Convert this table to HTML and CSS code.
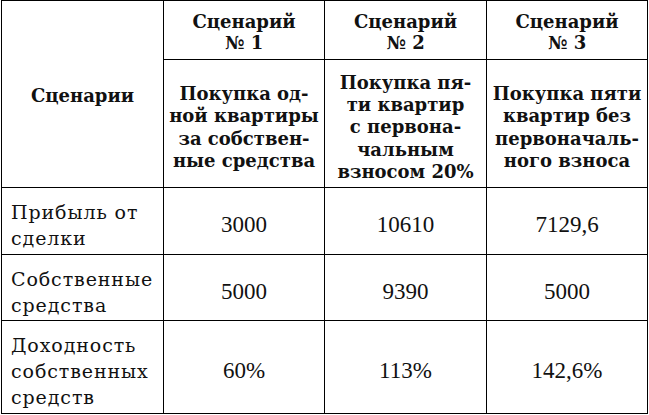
FILE: index.html
```html
<!DOCTYPE html>
<html lang="ru">
<head>
<meta charset="utf-8">
<link rel="stylesheet" href="styles.css">
</head>
<body>
<div class="table">
  <div class="cell head corner">Сценарии</div>
  <div class="cell head title">Сценарий<br>№ 1</div>
  <div class="cell head title">Сценарий<br>№ 2</div>
  <div class="cell head title">Сценарий<br>№ 3</div>
  <div class="cell head desc">Покупка од-<br>ной квартиры<br>за собствен-<br>ные средства</div>
  <div class="cell head desc">Покупка пя-<br>ти квартир<br>с первона-<br>чальным<br>взносом 20%</div>
  <div class="cell head desc">Покупка пяти<br>квартир без<br>первоначаль-<br>ного взноса</div>

  <div class="cell label">Прибыль от<br>сделки</div>
  <div class="cell num">3000</div>
  <div class="cell num">10610</div>
  <div class="cell num">7129,6</div>

  <div class="cell label">Собственные<br>средства</div>
  <div class="cell num">5000</div>
  <div class="cell num">9390</div>
  <div class="cell num">5000</div>

  <div class="cell label">Доходность<br>собственных<br>средств</div>
  <div class="cell num">60%</div>
  <div class="cell num">113%</div>
  <div class="cell num">142,6%</div>
</div>
</body>
</html>
```

FILE: styles.css
```css
html, body {
  margin: 0;
  padding: 0;
  background: #fff;
}
body {
  padding-left: 1px;
}
.table {
  display: grid;
  width: 645px;
  grid-template-columns: 161px 160px 161px 160px;
  grid-template-rows: 58px 127px 66px 65px 92px;
  gap: 1px;
  padding: 1px;
  background: #000;
  font-family: "DejaVu Serif", "Liberation Serif", serif;
  color: #111;
}
.cell {
  background: #fff;
  display: flex;
  flex-direction: column;
  justify-content: center;
  padding-top: 8px;
}
.head {
  font-weight: bold;
  font-size: 18px;
  line-height: 22.3px;
  text-align: center;
  align-items: center;
}
.title {
  padding-top: 4px;
  line-height: 21.5px;
}
.corner {
  grid-row: span 2;
  padding-top: 4px;
}
.label {
  font-size: 19px;
  line-height: 26px;
  letter-spacing: 0.9px;
  padding-left: 9px;
}
.num {
  font-family: "Liberation Serif", "DejaVu Serif", serif;
  font-size: 23px;
  text-align: center;
  align-items: center;
}
```
